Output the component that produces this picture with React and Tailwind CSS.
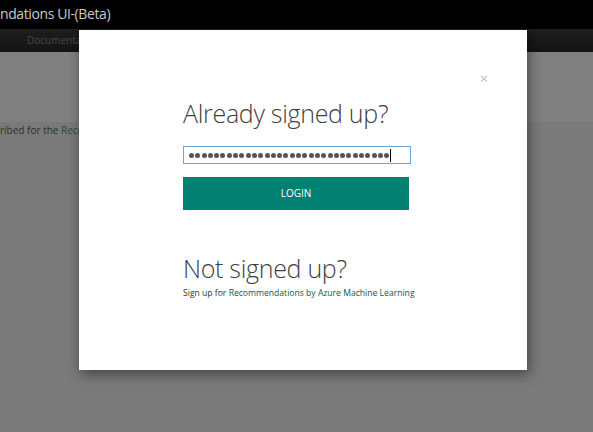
import React from "react";

export default function App() {
  const font = { fontFamily: '"Open Sans", "Noto Sans", sans-serif' };
  const dots = Array.from({ length: 32 });
  return (
    <div className="relative w-[593px] h-[432px] overflow-hidden bg-[#7a7a7a]" style={font}>
      <div className="h-[29px] bg-black flex items-center">
        <span className="text-[14px] text-[#c8c8c8] leading-none tracking-[-0.4px] -mt-[1px]">ndations UI-(Beta)</span>
      </div>
      <div className="h-[23px] bg-gradient-to-b from-[#1e1e1e] to-[#141414] flex items-center pl-[27px]">
        <span className="text-[10px] text-[#4a4a4a]">Documentation</span>
      </div>
      <div className="h-[70px] bg-[#808080]"></div>
      <div className="pt-[3px] text-[10px] text-[#2e2e2e] leading-none">
        ribed for the <span className="text-[#1d4a44]">Recommendations</span>
      </div>

      <div className="absolute left-[79px] top-[30px] w-[448px] h-[340px] bg-white shadow-[2px_4px_12px_rgba(0,0,0,0.45)]">
        <div className="absolute left-[401px] top-[42px] text-[14px] leading-none text-[#b9b9b9]">×</div>
        <div className="pl-[104px] pt-[67px] w-[340px]">
          <h1 className="text-[25px] font-light leading-[32px] text-[#3f3f3f] tracking-[-0.3px]">Already signed up?</h1>
          <div className="mt-[17px] h-[18px] w-[228px] border border-[#64a8e8] flex items-center pl-[5px]">
            <div className="flex gap-[1.3px]">
              {dots.map((_, i) => (
                <span key={i} className="block w-[5px] h-[5px] rounded-full bg-[#555]"></span>
              ))}
            </div>
            <span className="w-[1px] h-[13px] bg-black ml-[1px]"></span>
          </div>
          <button className="mt-[13px] h-[33px] w-[226px] bg-[#028173] text-white text-[10px] flex items-center justify-center">
            LOGIN
          </button>
          <h2 className="mt-[42px] text-[25px] font-light leading-[32px] text-[#3f3f3f] tracking-[-0.3px]">Not signed up?</h2>
          <p className="mt-[5px] text-[8.6px] leading-none text-[#333] whitespace-nowrap">
            Sign up for <span className="text-[#0b5a50]">Recommendations by Azure Machine Learning</span>
          </p>
        </div>
      </div>
    </div>
  );
}
